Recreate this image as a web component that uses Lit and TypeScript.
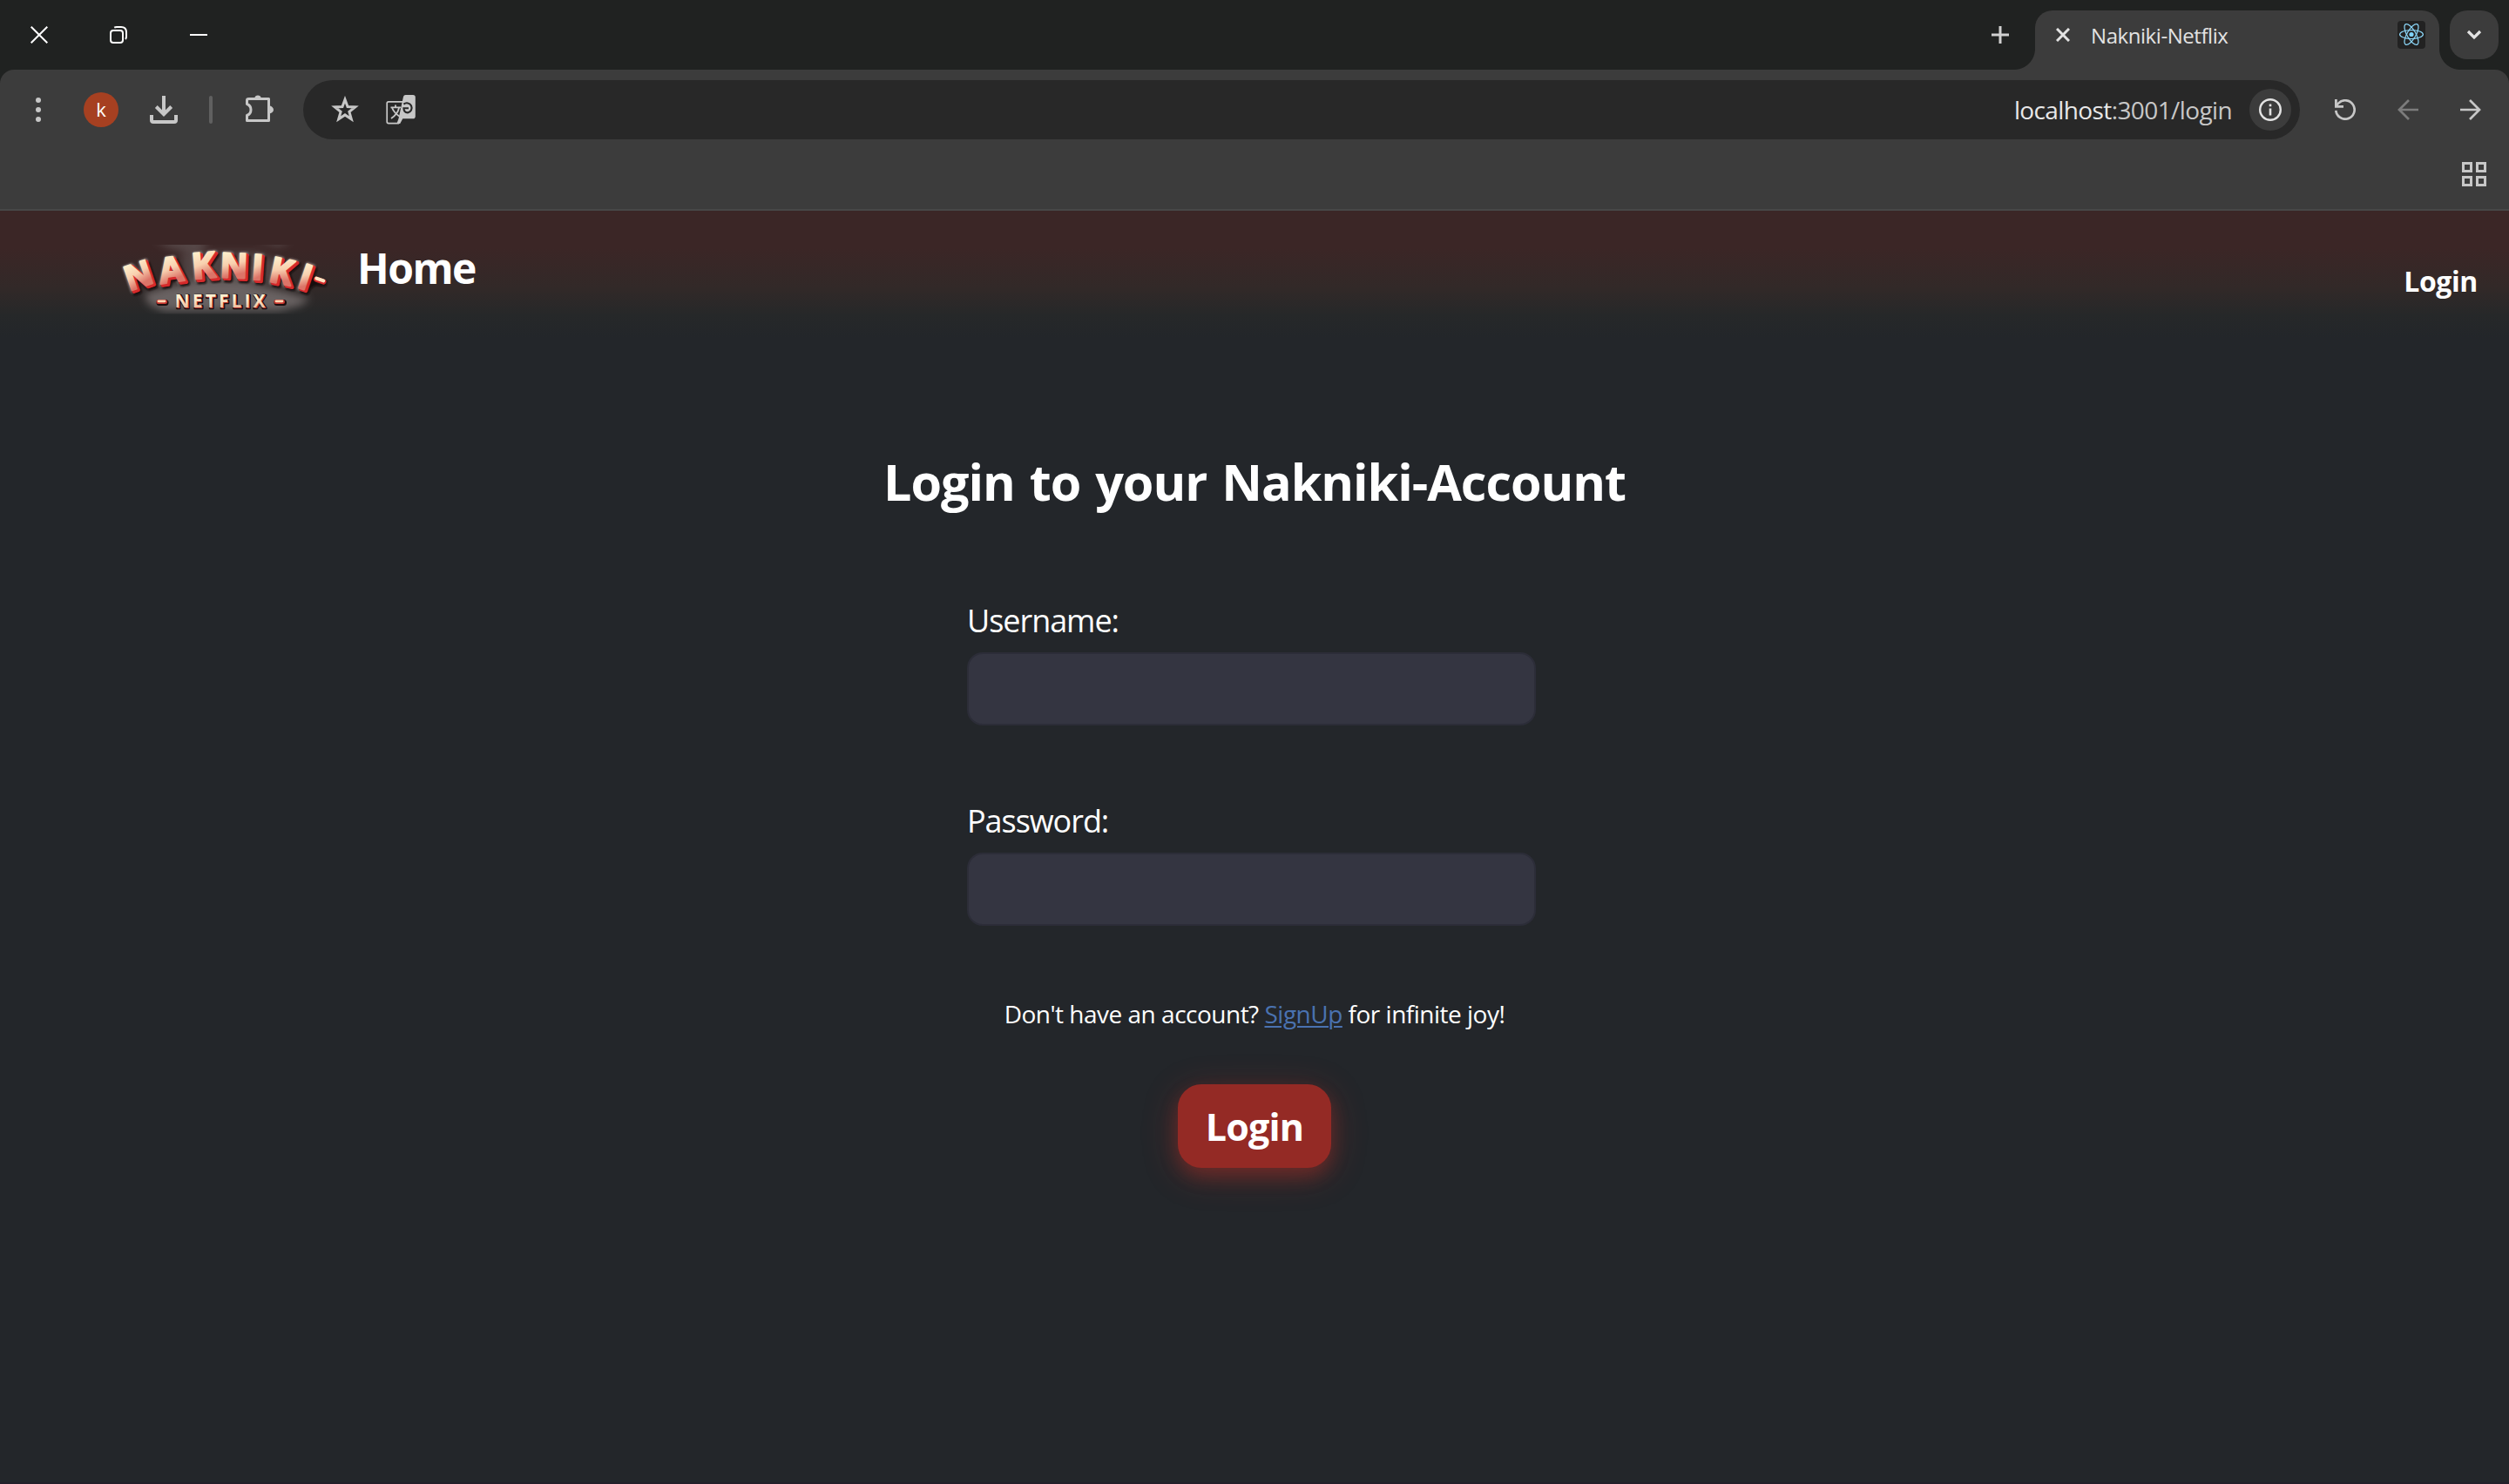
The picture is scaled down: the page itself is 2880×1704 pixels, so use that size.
import { LitElement, html, css, svg } from "lit";
import { customElement } from "lit/decorators.js";

interface LogoLetter {
  glyph: string;
  x: number;
  y: number;
  tilt: number;
  size: number;
}

const LOGO_LETTERS: LogoLetter[] = [
  { glyph: "N", x: 29.5, y: 41.5, tilt: -19, size: 39 },
  { glyph: "A", x: 67, y: 35.5, tilt: -8, size: 40 },
  { glyph: "K", x: 104.5, y: 30.5, tilt: -5, size: 41 },
  { glyph: "N", x: 139.5, y: 30.5, tilt: 2, size: 39 },
  { glyph: "I", x: 166.5, y: 32.5, tilt: 4, size: 40 },
  { glyph: "K", x: 194, y: 37, tilt: 12, size: 40 },
  { glyph: "I", x: 221.5, y: 43.5, tilt: 19, size: 40 },
];

@customElement("browser-tab-strip")
export class BrowserTabStrip extends LitElement {
  static styles = css`
    :host {
      display: block;
      font-family: "Open Sans", "Noto Sans", sans-serif;
    }
    .strip {
      display: flex;
      align-items: center;
      height: 80px;
      background: #202221;
    }
    svg {
      display: block;
      flex: none;
    }
    .close {
      margin-left: 35px;
    }
    .restore {
      margin-left: 71px;
    }
    .minimize {
      margin-left: 72px;
    }
    .plus {
      margin-left: auto;
    }
    .flare {
      flex: none;
      align-self: flex-end;
      width: 24px;
      height: 24px;
    }
    .flare.start {
      margin-left: 6px;
      background: radial-gradient(circle at 0 0, transparent 23.5px, #3c3c3c 24.5px);
    }
    .flare.end {
      background: radial-gradient(circle at 100% 0, transparent 23.5px, #3c3c3c 24.5px);
    }
    .tab {
      display: flex;
      align-items: center;
      box-sizing: border-box;
      width: 464px;
      height: 68px;
      align-self: flex-end;
      padding: 0 16px 12px 24px;
      border-radius: 20px 20px 0 0;
      background: #3c3c3c;
    }
    .title {
      margin-left: 24px;
      padding-top: 2px;
      flex: 1;
      color: #e3e3e3;
      font-size: 24px;
      line-height: 32px;
      letter-spacing: -0.44px;
      white-space: nowrap;
    }
    .search {
      display: flex;
      align-items: center;
      justify-content: center;
      width: 56px;
      height: 56px;
      margin: 0 12px 0 -12px;
      border-radius: 20px;
      background: #3c3c3c;
    }
  `;

  render() {
    return html`
      <div class="strip">
        <svg class="close" width="20" height="20" viewBox="0 0 20 20">
          <path d="M.7.7 19.3 19.3M19.3.7.7 19.3" stroke="#fff" stroke-width="2" fill="none" />
        </svg>
        <svg class="restore" width="20" height="20" viewBox="0 0 20 20">
          <rect x="1" y="5" width="14" height="14" rx="3" stroke="#fff" stroke-width="2" fill="none" />
          <path d="M5.2 1.6Q6.3 1 8 1H13Q19 1 19 7V12Q19 14 18 15" stroke="#fff" stroke-width="2" fill="none" />
        </svg>
        <svg class="minimize" width="20" height="20" viewBox="0 0 20 20">
          <path d="M0 10H20" stroke="#fff" stroke-width="2" />
        </svg>
        <svg class="plus" width="20" height="20" viewBox="0 0 20 20">
          <path d="M10 0V20M0 10H20" stroke="#d0d0d0" stroke-width="3" />
        </svg>
        <div class="flare start"></div>
        <div class="tab">
          <svg width="16" height="16" viewBox="0 0 16 16">
            <path d="M1 1 15 15M15 1 1 15" stroke="#e3e3e3" stroke-width="3" fill="none" />
          </svg>
          <span class="title">Nakniki-Netflix</span>
          <svg width="32" height="32" viewBox="0 0 32 32">
            <rect width="32" height="32" rx="4" fill="#222" />
            <g fill="none" stroke="#8ad4f5" stroke-width="1.25">
              <ellipse cx="16" cy="15.5" rx="13.4" ry="5" />
              <ellipse cx="16" cy="15.5" rx="13.4" ry="5" transform="rotate(60 16 15.5)" />
              <ellipse cx="16" cy="15.5" rx="13.4" ry="5" transform="rotate(120 16 15.5)" />
            </g>
            <circle cx="16" cy="15.5" r="2.6" fill="#7fd3fa" />
          </svg>
        </div>
        <div class="flare end"></div>
        <div class="search">
          <svg width="18" height="12" viewBox="0 0 18 12">
            <path d="M2 2 9 9 16 2" stroke="#e3e3e3" stroke-width="3.2" fill="none" />
          </svg>
        </div>
      </div>
    `;
  }
}

@customElement("browser-toolbar")
export class BrowserToolbar extends LitElement {
  static styles = css`
    :host {
      display: block;
      background: #202221;
      font-family: "Open Sans", "Noto Sans", sans-serif;
    }
    .panel {
      box-sizing: border-box;
      height: 162px;
      border-bottom: 2px solid #474747;
      border-radius: 16px 16px 0 0;
      background: #3c3c3c;
    }
    svg {
      display: block;
      flex: none;
    }
    .row {
      display: flex;
      align-items: center;
      height: 92px;
    }
    .menu {
      margin-left: 41px;
    }
    .avatar {
      width: 40px;
      height: 40px;
      margin-left: 49px;
      border-radius: 50%;
      background: #a64021;
      color: #fff;
      font-size: 22px;
      line-height: 39px;
      text-align: center;
    }
    .download {
      margin-left: 36px;
    }
    .divider {
      width: 4px;
      height: 32px;
      margin-left: 36px;
      border-radius: 2px;
      background: #606060;
    }
    .extensions {
      margin: 0 0 4px 38px;
    }
    .omnibox {
      display: flex;
      align-items: center;
      box-sizing: border-box;
      flex: 1;
      height: 68px;
      margin-left: 34px;
      padding: 0 10px 0 32px;
      border-radius: 34px;
      background: #282828;
    }
    .translate {
      margin-left: 31px;
    }
    .url {
      margin-left: auto;
      padding-bottom: 1px;
      color: #c7c7c7;
      font-size: 28px;
      line-height: 40px;
      letter-spacing: -0.61px;
      white-space: nowrap;
    }
    .host {
      color: #e8e8e8;
    }
    .info {
      display: flex;
      align-items: center;
      justify-content: center;
      width: 48px;
      height: 48px;
      margin-left: 20px;
      border-radius: 50%;
      background: #3c3c3c;
    }
    .reload {
      margin-left: 40px;
    }
    .back {
      margin-left: 48px;
    }
    .forward {
      margin: 0 32px 0 48px;
    }
    .bookmarks {
      display: flex;
      justify-content: flex-end;
      padding: 14px 26px 0 0;
    }
  `;

  render() {
    return html`
      <div class="panel">
        <div class="row">
          <svg class="menu" width="6" height="30" viewBox="0 0 6 30">
            <g fill="#c7c7c7">
              <circle cx="3" cy="4" r="3" />
              <circle cx="3" cy="15" r="3" />
              <circle cx="3" cy="26" r="3" />
            </g>
          </svg>
          <div class="avatar">k</div>
          <svg class="download" width="32" height="32" viewBox="0 0 32 32">
            <path d="M16 0V21M7.3 12.5 16 21.2 24.7 12.5" stroke="#c7c7c7" stroke-width="4" fill="none" />
            <path d="M2 22V28Q2 30 4 30H28Q30 30 30 28V22" stroke="#c7c7c7" stroke-width="4" fill="none" />
          </svg>
          <div class="divider"></div>
          <svg class="extensions" width="32" height="32" viewBox="0 0 32 32">
            <path
              d="M3.5 5.5H26.5V30.5H1.5V24.5Q6 22.8 6 18T1.5 11.5V7.3Q1.5 5.5 3.5 5.5Z"
              stroke="#c7c7c7"
              stroke-width="3"
              stroke-linejoin="round"
              fill="none"
            />
            <path d="M10 5A4.2 5 0 0 1 18 5Z M27 13.6A5 4.4 0 0 1 27 22.4Z" fill="#c7c7c7" />
          </svg>
          <div class="omnibox">
            <svg width="32" height="32" viewBox="0 0 32 32">
              <path
                d="M16 4.6 19 12.9 27.7 13.2 20.9 18.6 23.3 27 16 22.2 8.7 27 11.1 18.6 4.3 13.2 13 12.9Z"
                transform="translate(0 -.3)"
                stroke="#c7c7c7"
                stroke-width="3"
                fill="none"
              />
            </svg>
            <svg class="translate" width="34" height="34" viewBox="0 0 34 34">
              <path d="M19 7.8H3Q1.2 7.8 1.2 9.6V30.8Q1.2 32.6 3 32.6H15" stroke="#c7c7c7" stroke-width="1.7" fill="none" />
              <path
                d="M5.5 14.3H17M11 11.5V14.3M7.2 15Q9 20.5 17.5 26M15 15Q13.5 22 6 27"
                stroke="#c7c7c7"
                stroke-width="1.8"
                fill="none"
              />
              <path d="M22.5 0H31Q33.8 0 33.8 2.8V24.4Q33.8 27.2 31 27.2H19.3L16.2 33H12.4L14.5 27.2 20 2Q20.5 0 22.5 0Z" fill="#c7c7c7" />
              <path d="M20.4 10.6A5.6 5.6 0 1 1 25 20.4Q20.6 20.2 20.4 15.2H26" stroke="#282828" stroke-width="2.1" fill="none" />
            </svg>
            <div class="url"><span class="host">localhost</span>:3001/login</div>
            <div class="info">
              <svg width="26" height="26" viewBox="0 0 26 26">
                <circle cx="13" cy="13" r="11.8" stroke="#e3e3e3" stroke-width="2.4" fill="none" />
                <path d="M13 11.6V19.6M13 6.6V9.2" stroke="#e3e3e3" stroke-width="2.6" />
              </svg>
            </div>
          </div>
          <svg class="reload" width="24" height="24" viewBox="0 0 24 24">
            <path d="M1.3 13A10.7 10.7 0 1 0 4.4 4.4L1.8 7.2" stroke="#c7c7c7" stroke-width="2.7" fill="none" />
            <path d="M1.4 0V8.4H10" stroke="#c7c7c7" stroke-width="2.8" fill="none" />
          </svg>
          <svg class="back" width="24" height="24" viewBox="0 0 24 24">
            <path d="M24 12H2M13 1 2 12 13 23" stroke="#7c7c7c" stroke-width="2.7" fill="none" />
          </svg>
          <svg class="forward" width="24" height="24" viewBox="0 0 24 24">
            <path d="M0 12H22M11 1 22 12 11 23" stroke="#c7c7c7" stroke-width="2.7" fill="none" />
          </svg>
        </div>
        <div class="bookmarks">
          <svg width="28" height="28" viewBox="0 0 28 28">
            <g fill="none" stroke="#c7c7c7" stroke-width="3">
              <rect x="1.5" y="1.5" width="9" height="9" />
              <rect x="17.5" y="1.5" width="9" height="9" />
              <rect x="1.5" y="17.5" width="9" height="9" />
              <rect x="17.5" y="17.5" width="9" height="9" />
            </g>
          </svg>
        </div>
      </div>
    `;
  }
}

@customElement("site-logo")
export class SiteLogo extends LitElement {
  static styles = css`
    :host {
      display: block;
    }
    svg {
      display: block;
      overflow: visible;
    }
    text {
      font-family: "Open Sans", "Noto Sans", sans-serif;
      font-weight: 700;
      text-anchor: middle;
      stroke-linejoin: round;
    }
    .shade {
      fill: #140b0c;
      stroke: #140b0c;
      stroke-width: 5px;
    }
    .rim {
      fill: #8d807f;
      stroke: #8d807f;
      stroke-width: 5.5px;
    }
    .side {
      fill: #d52a2c;
      stroke: #d52a2c;
      stroke-width: 4px;
    }
    .face {
      fill: url(#cream);
      stroke: url(#cream);
      stroke-width: 2.4px;
    }
    .small {
      font-size: 21px;
    }
    .small-shade {
      fill: #1b0d0e;
      stroke: #1b0d0e;
      stroke-width: 2.5px;
    }
    .small-side {
      fill: #b83a34;
    }
    .small-face {
      fill: url(#cream-small);
    }
  `;

  private layer(kind: string, dx: number, dy: number) {
    return LOGO_LETTERS.map(
      (l) => svg`<text class=${kind} font-size=${l.size}
        transform="translate(${l.x + dx} ${l.y + dy}) rotate(${l.tilt})" y=${l.size * 0.357}>${l.glyph}</text>`,
    );
  }

  render() {
    return html`
      <svg width="260" height="90" viewBox="0 0 260 90">
        <defs>
          <linearGradient id="cream" x1="0" y1="0" x2="0.15" y2="1">
            <stop offset="0.25" stop-color="#fff3cf" />
            <stop offset="0.55" stop-color="#f8cfae" />
            <stop offset="0.8" stop-color="#dc7468" />
          </linearGradient>
          <linearGradient id="cream-small" x1="0" y1="0" x2="0" y2="1">
            <stop offset="0.4" stop-color="#fff0d0" />
            <stop offset="0.9" stop-color="#eab090" />
          </linearGradient>
          <filter id="smoke" x="-20%" y="-40%" width="140%" height="180%">
            <feGaussianBlur stdDeviation="5" />
          </filter>
          <filter id="soft" x="-20%" y="-20%" width="140%" height="140%">
            <feGaussianBlur stdDeviation="1.2" />
          </filter>
          <clipPath id="frame"><rect x="8" y="6" width="240" height="79.5" /></clipPath>
        </defs>
        <g clip-path="url(#frame)">
          <g filter="url(#smoke)" fill="#7c7676">
            <path d="M36 62 62 54 100 48 146 48 198 60 226 68 214 76 190 82 58 82 40 74Z" opacity="0.75" />
            <path d="M46 0H112L98 14 66 10Z M160 0H206L190 8Z" opacity="0.45" />
            <path d="M78 14H166L200 30 190 50H80Z" opacity="0.35" />
          </g>
          <g filter="url(#soft)">
            ${this.layer("rim", 0.2, 0.2)}
            ${this.layer("shade", 2.6, 2.8)}
            <path d="M226 40 236 50 246 47 244 54 232 53 222 60Z" fill="#140b0c" />
          </g>
          ${this.layer("side", 1.2, 1.2)} ${this.layer("face", -0.9, -0.7)}
          <path d="M233 45.6 241.5 48.6" stroke="#d52a2c" stroke-width="6" stroke-linecap="round" />
          <path d="M233.3 44.6 241.3 47.4" stroke="#ffe6c4" stroke-width="4" stroke-linecap="round" />
          <g class="small">
            <text class="small-shade" x="123.6" y="79" textLength="104">NETFLIX</text>
            <text class="small-side" x="123.4" y="78.8" textLength="104">NETFLIX</text>
            <text class="small-face" x="122.6" y="78" textLength="104">NETFLIX</text>
          </g>
          <g stroke-linecap="round">
            <path d="M53 72.4H60M188 72.4H195.5" stroke="#1b0d0e" stroke-width="7" />
            <path d="M52 71.6H59.5M187 71.6H194.5" stroke="#c9372f" stroke-width="5" />
            <path d="M52 70.8H59M187 70.8H194" stroke="#fbd9b4" stroke-width="2.8" />
          </g>
        </g>
      </svg>
    `;
  }
}

@customElement("login-page")
export class LoginPage extends LitElement {
  static styles = css`
    :host {
      display: flex;
      flex-direction: column;
      box-sizing: border-box;
      border-bottom: 2px solid #231f2a;
      background: #23262a;
      color: #fff;
      font-family: "Open Sans", "Noto Sans", sans-serif;
    }
    .nav {
      display: flex;
      align-items: flex-start;
      box-sizing: border-box;
      height: 148px;
      padding: 33px 36px 0 130px;
      background: linear-gradient(to bottom, #3b2626 0, #3b2626 44px, #322928 88px, #262829 120px, #23262a 146px);
      font-weight: 700;
    }
    .home {
      margin: 3px 0 0 20px;
      font-size: 48px;
      line-height: 60px;
      letter-spacing: -1.5px;
    }
    .nav-login {
      margin: 28px 0 0 auto;
      font-size: 32px;
      line-height: 40px;
      letter-spacing: -0.4px;
    }
    .form {
      display: flex;
      flex-direction: column;
      align-items: center;
      padding-top: 123px;
    }
    .heading {
      margin: 0 0 95px;
      font-size: 57.5px;
      font-weight: 700;
      line-height: 80px;
      letter-spacing: -1.02px;
      word-spacing: 3px;
      white-space: nowrap;
    }
    .field {
      display: flex;
      flex-direction: column;
      gap: 11px;
      width: 653px;
      margin-right: 7px;
    }
    .field + .field {
      margin-top: 85px;
    }
    .label {
      font-size: 36px;
      line-height: 50px;
      letter-spacing: -1.05px;
    }
    .input {
      box-sizing: border-box;
      width: 100%;
      height: 84px;
      padding: 0 20px;
      border: 2px solid #2c2d38;
      border-radius: 18px;
      outline: none;
      background: #343541;
      color: #fff;
      font: inherit;
    }
    .hint {
      margin: 81px 0 61px;
      font-size: 28px;
      line-height: 40px;
      letter-spacing: -0.5px;
      white-space: nowrap;
    }
    .link {
      color: #4a72b0;
      text-decoration: underline;
      text-decoration-thickness: 2px;
      text-underline-offset: 3px;
    }
    .submit {
      width: 176px;
      height: 96px;
      padding: 2px 0 0;
      border: 0;
      border-radius: 27px;
      background: #942a25;
      box-shadow: 0 8px 40px rgba(200, 50, 40, 0.3), 0 10px 20px rgba(200, 50, 40, 0.28);
      color: #fff;
      font-family: inherit;
      font-size: 43px;
      font-weight: 700;
      line-height: 60px;
      letter-spacing: -0.833px;
    }
  `;

  render() {
    return html`
      <nav class="nav">
        <site-logo></site-logo>
        <span class="home">Home</span>
        <span class="nav-login">Login</span>
      </nav>
      <div class="form">
        <h1 class="heading">Login to your Nakniki-Account</h1>
        <div class="field">
          <label class="label" for="username">Username:</label>
          <input class="input" id="username" type="text" />
        </div>
        <div class="field">
          <label class="label" for="password">Password:</label>
          <input class="input" id="password" type="password" />
        </div>
        <p class="hint">Don't have an account? <a class="link" href="#">SignUp</a> for infinite joy!</p>
        <button class="submit" type="button">Login</button>
      </div>
    `;
  }
}

@customElement("app-root")
export class AppRoot extends LitElement {
  static styles = css`
    :host {
      display: flex;
      flex-direction: column;
      width: 2880px;
      height: 1704px;
      overflow: hidden;
    }
    .page {
      flex: 1;
    }
  `;

  render() {
    return html`
      <browser-tab-strip></browser-tab-strip>
      <browser-toolbar></browser-toolbar>
      <login-page class="page"></login-page>
    `;
  }
}
